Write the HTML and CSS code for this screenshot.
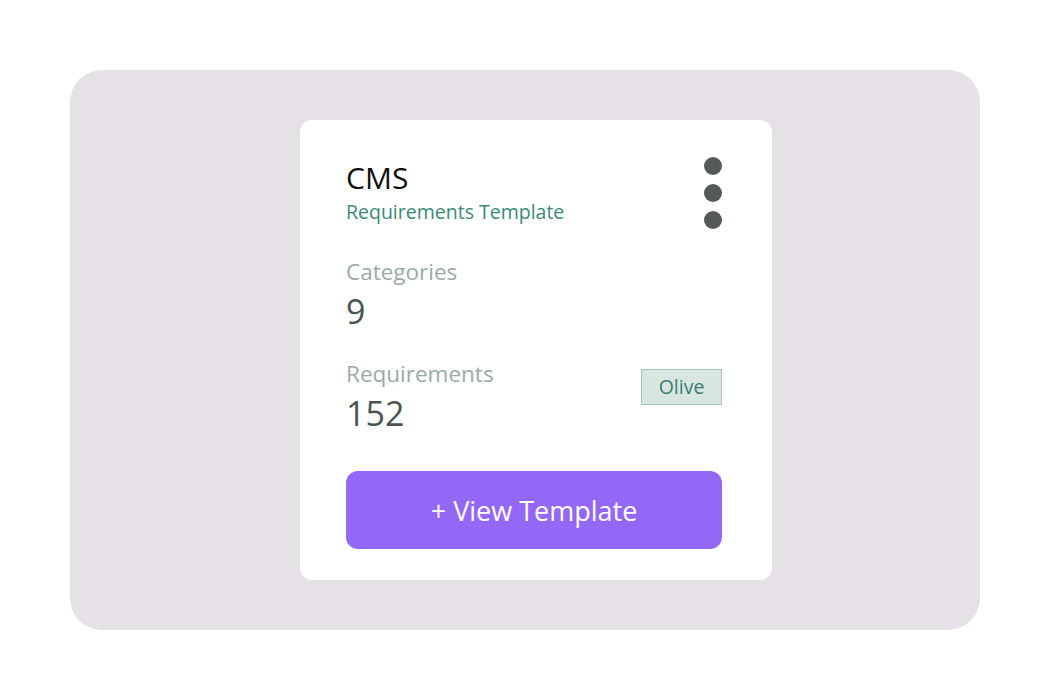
FILE: index.html
```html
<!DOCTYPE html>
<html>
<head>
<meta charset="utf-8">
<link rel="stylesheet" href="styles.css">
</head>
<body>
<div class="stage">
  <div class="card">
    <div class="head">
      <div class="titles">
        <div class="title">CMS</div>
        <div class="subtitle">Requirements Template</div>
      </div>
      <div class="dots"><span></span><span></span><span></span></div>
    </div>
    <div class="stat first">
      <div class="label">Categories</div>
      <div class="value">9</div>
    </div>
    <div class="stat row">
      <div>
        <div class="label">Requirements</div>
        <div class="value">152</div>
      </div>
      <div class="badge">Olive</div>
    </div>
    <button class="btn">+ View Template</button>
  </div>
</div>
</body>
</html>
```

FILE: styles.css
```css
html, body { margin: 0; padding: 0; background: #ffffff; }
body { width: 1050px; height: 700px; font-family: "Open Sans", "Noto Sans", sans-serif; }
.stage {
  margin: 70px 0 0 70px;
  width: 910px;
  height: 560px;
  background: #e6e1e7;
  border-radius: 32px;
  display: flex;
  align-items: flex-start;
  padding: 50px 0 0 230px;
  box-sizing: border-box;
}
.card {
  width: 472px;
  height: 460px;
  background: #fff;
  border-radius: 12px;
  box-sizing: border-box;
  padding: 36px 50px 31px 46px;
  display: flex;
  flex-direction: column;
}
.head { display: flex; justify-content: space-between; align-items: flex-start; }
.title { font-size: 30px; line-height: 44px; color: #111; }
.subtitle { font-size: 19.5px; line-height: 24px; color: #3b8a78; }
.dots { display: flex; flex-direction: column; gap: 9px; padding-top: 1px; }
.dots span { width: 18px; height: 18px; border-radius: 50%; background: #535a58; display: block; }
.stat.first { margin-top: 28px; }
.stat.row { display: flex; justify-content: space-between; align-items: flex-start; margin-top: 26px; }
.label { font-size: 22.5px; line-height: 30px; color: #9aaba7; }
.value { font-size: 34px; line-height: 44px; margin-top: 2px; color: #4a5553; }
.badge {
  margin-top: 10px;
  width: 81px; height: 36px;
  box-sizing: border-box;
  background: #d8e6e2;
  border: 1px solid #a9c1bb;
  color: #3a7d6e;
  font-size: 19.5px;
  line-height: 34px;
  text-align: center;
}
.btn {
  margin-top: auto;
  height: 78px;
  width: 376px;
  border: none;
  border-radius: 12px;
  background: #9368f6;
  color: #fff;
  font-family: "Open Sans", "Noto Sans", sans-serif;
  font-size: 27px;
  padding: 0;
}
```
